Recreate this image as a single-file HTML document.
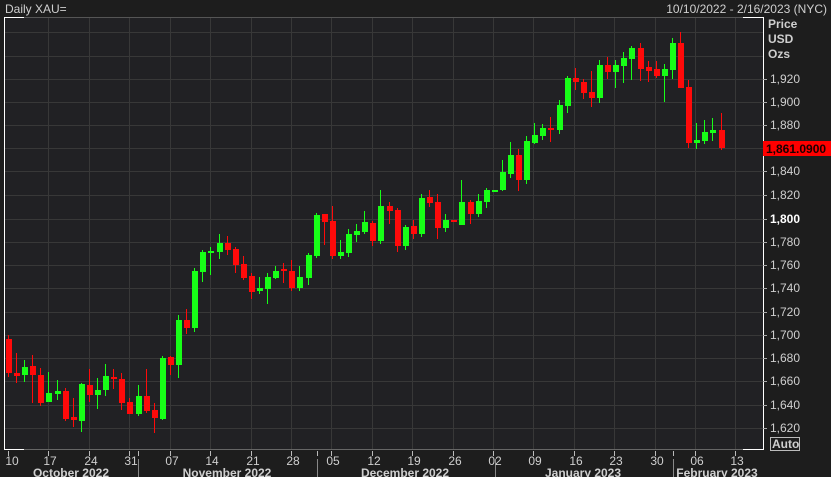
<!DOCTYPE html>
<html><head><meta charset="utf-8"><style>
html,body{margin:0;padding:0;background:#1d1d1d;width:831px;height:477px;overflow:hidden}
svg{display:block}
text{font-family:"Liberation Sans Narrow","Liberation Sans",sans-serif;fill:#cfcfcf;font-size:12px}
.b{font-weight:bold}
</style></head><body>
<svg width="831" height="477" viewBox="0 0 831 477" xmlns="http://www.w3.org/2000/svg">
<rect x="0" y="0" width="831" height="477" fill="#1d1d1d"/>
<text x="5" y="13" font-size="12">Daily XAU=</text>
<text x="827" y="13" text-anchor="end" font-size="11.5">10/10/2022 - 2/16/2023 (NYC)</text>
<rect x="4" y="17" width="759" height="433" fill="#212124"/>
<g stroke="#383838" stroke-width="1">
<path d="M4 32.5H763M4 56.5H763M4 79.5H763M4 102.5H763M4 125.5H763M4 148.5H763M4 171.5H763M4 195.5H763M4 219.5H763M4 242.5H763M4 265.5H763M4 288.5H763M4 312.5H763M4 335.5H763M4 358.5H763M4 381.5H763M4 405.5H763M4 428.5H763"/>
<path d="M48.5 17V450M89.5 17V450M129.5 17V450M170.5 17V450M210.5 17V450M251.5 17V450M291.5 17V450M331.5 17V450M372.5 17V450M412.5 17V450M453.5 17V450M493.5 17V450M533.5 17V450M574.5 17V450M614.5 17V450M655.5 17V450M695.5 17V450M735.5 17V450"/>
</g>
<path d="M4 17.5H763" stroke="#555" stroke-width="1"/>
<path d="M4 17.5H24M743 17.5H763" stroke="#fff" stroke-width="1"/>
<path d="M4.5 17V450M763.5 17V450M4 449.5H24M743 449.5H763" stroke="#fff" stroke-width="1"/>
<path d="M24 449.5H743" stroke="#666" stroke-width="1"/>
<g fill="#ff0a0a">
<rect x="8" y="335" width="1" height="42"/><rect x="6" y="339" width="6" height="34"/>
<rect x="16" y="353" width="1" height="30"/><rect x="14" y="373" width="6" height="3"/>
<rect x="32" y="355" width="1" height="48"/><rect x="30" y="366" width="6" height="9"/>
<rect x="40" y="368" width="1" height="38"/><rect x="38" y="375" width="6" height="28"/>
<rect x="65" y="388" width="1" height="33"/><rect x="63" y="391" width="6" height="28"/>
<rect x="73" y="398" width="1" height="29"/><rect x="71" y="417" width="6" height="3"/>
<rect x="89" y="369" width="1" height="33"/><rect x="87" y="385" width="6" height="10"/>
<rect x="113" y="369" width="1" height="20"/><rect x="111" y="377" width="6" height="2"/>
<rect x="121" y="373" width="1" height="37"/><rect x="119" y="379" width="6" height="24"/>
<rect x="129" y="398" width="1" height="16"/><rect x="127" y="402" width="6" height="12"/>
<rect x="146" y="369" width="1" height="44"/><rect x="144" y="396" width="6" height="15"/>
<rect x="154" y="403" width="1" height="30"/><rect x="152" y="410" width="6" height="8"/>
<rect x="170" y="356" width="1" height="19"/><rect x="168" y="357" width="6" height="8"/>
<rect x="186" y="309" width="1" height="25"/><rect x="184" y="320" width="6" height="8"/>
<rect x="227" y="236" width="1" height="19"/><rect x="225" y="243" width="6" height="7"/>
<rect x="235" y="247" width="1" height="26"/><rect x="233" y="249" width="6" height="16"/>
<rect x="243" y="256" width="1" height="24"/><rect x="241" y="264" width="6" height="14"/>
<rect x="251" y="273" width="1" height="26"/><rect x="249" y="276" width="6" height="16"/>
<rect x="283" y="263" width="1" height="20"/><rect x="281" y="269" width="6" height="2"/>
<rect x="291" y="260" width="1" height="31"/><rect x="289" y="271" width="6" height="17"/>
<rect x="324" y="214" width="1" height="31"/><rect x="322" y="214" width="6" height="8"/>
<rect x="332" y="206" width="1" height="53"/><rect x="330" y="221" width="6" height="35"/>
<rect x="372" y="221" width="1" height="25"/><rect x="370" y="223" width="6" height="18"/>
<rect x="389" y="202" width="1" height="22"/><rect x="387" y="206" width="6" height="5"/>
<rect x="397" y="208" width="1" height="44"/><rect x="395" y="210" width="6" height="36"/>
<rect x="413" y="220" width="1" height="19"/><rect x="411" y="226" width="6" height="8"/>
<rect x="429" y="190" width="1" height="17"/><rect x="427" y="197" width="6" height="6"/>
<rect x="437" y="194" width="1" height="45"/><rect x="435" y="202" width="6" height="26"/>
<rect x="451" y="220" width="6" height="2"/>
<rect x="470" y="200" width="1" height="24"/><rect x="468" y="202" width="6" height="12"/>
<rect x="518" y="149" width="1" height="42"/><rect x="516" y="155" width="6" height="25"/>
<rect x="550" y="117" width="1" height="25"/><rect x="548" y="128" width="6" height="2"/>
<rect x="575" y="68" width="1" height="22"/><rect x="573" y="78" width="6" height="4"/>
<rect x="583" y="79" width="1" height="20"/><rect x="581" y="82" width="6" height="11"/>
<rect x="591" y="71" width="1" height="36"/><rect x="589" y="92" width="6" height="6"/>
<rect x="607" y="57" width="1" height="22"/><rect x="605" y="65" width="6" height="7"/>
<rect x="640" y="43" width="1" height="38"/><rect x="638" y="48" width="6" height="21"/>
<rect x="648" y="61" width="1" height="21"/><rect x="646" y="67" width="6" height="4"/>
<rect x="656" y="61" width="1" height="17"/><rect x="654" y="69" width="6" height="7"/>
<rect x="680" y="32" width="1" height="56"/><rect x="678" y="43" width="6" height="45"/>
<rect x="688" y="80" width="1" height="68"/><rect x="686" y="87" width="6" height="56"/>
<rect x="721" y="113" width="1" height="37"/><rect x="719" y="130" width="6" height="18"/>
</g>
<g fill="#17ff17">
<rect x="24" y="360" width="1" height="22"/><rect x="22" y="367" width="6" height="8"/>
<rect x="48" y="372" width="1" height="30"/><rect x="46" y="393" width="6" height="9"/>
<rect x="57" y="380" width="1" height="20"/><rect x="55" y="391" width="6" height="3"/>
<rect x="81" y="383" width="1" height="49"/><rect x="79" y="384" width="6" height="37"/>
<rect x="97" y="378" width="1" height="31"/><rect x="95" y="390" width="6" height="5"/>
<rect x="105" y="364" width="1" height="32"/><rect x="103" y="376" width="6" height="14"/>
<rect x="138" y="385" width="1" height="31"/><rect x="136" y="396" width="6" height="18"/>
<rect x="162" y="356" width="1" height="64"/><rect x="160" y="358" width="6" height="61"/>
<rect x="178" y="315" width="1" height="63"/><rect x="176" y="320" width="6" height="45"/>
<rect x="194" y="268" width="1" height="64"/><rect x="192" y="271" width="6" height="57"/>
<rect x="202" y="250" width="1" height="32"/><rect x="200" y="252" width="6" height="20"/>
<rect x="210" y="247" width="1" height="28"/><rect x="208" y="251" width="6" height="2"/>
<rect x="219" y="234" width="1" height="25"/><rect x="217" y="243" width="6" height="9"/>
<rect x="259" y="277" width="1" height="17"/><rect x="257" y="288" width="6" height="3"/>
<rect x="267" y="273" width="1" height="31"/><rect x="265" y="277" width="6" height="12"/>
<rect x="275" y="266" width="1" height="13"/><rect x="273" y="271" width="6" height="7"/>
<rect x="299" y="266" width="1" height="25"/><rect x="297" y="277" width="6" height="11"/>
<rect x="308" y="253" width="1" height="32"/><rect x="306" y="255" width="6" height="23"/>
<rect x="316" y="213" width="1" height="45"/><rect x="314" y="215" width="6" height="41"/>
<rect x="340" y="240" width="1" height="19"/><rect x="338" y="252" width="6" height="4"/>
<rect x="348" y="229" width="1" height="28"/><rect x="346" y="234" width="6" height="19"/>
<rect x="356" y="224" width="1" height="18"/><rect x="354" y="231" width="6" height="4"/>
<rect x="364" y="211" width="1" height="23"/><rect x="362" y="222" width="6" height="10"/>
<rect x="380" y="190" width="1" height="54"/><rect x="378" y="206" width="6" height="35"/>
<rect x="405" y="225" width="1" height="25"/><rect x="403" y="227" width="6" height="19"/>
<rect x="421" y="194" width="1" height="43"/><rect x="419" y="198" width="6" height="36"/>
<rect x="445" y="214" width="1" height="18"/><rect x="443" y="220" width="6" height="8"/>
<rect x="461" y="180" width="1" height="45"/><rect x="459" y="202" width="6" height="23"/>
<rect x="478" y="194" width="1" height="23"/><rect x="476" y="201" width="6" height="13"/>
<rect x="486" y="188" width="1" height="20"/><rect x="484" y="190" width="6" height="12"/>
<rect x="492" y="190" width="6" height="2"/>
<rect x="502" y="160" width="1" height="31"/><rect x="500" y="172" width="6" height="18"/>
<rect x="510" y="142" width="1" height="36"/><rect x="508" y="155" width="6" height="19"/>
<rect x="526" y="136" width="1" height="48"/><rect x="524" y="141" width="6" height="39"/>
<rect x="534" y="123" width="1" height="21"/><rect x="532" y="135" width="6" height="8"/>
<rect x="542" y="124" width="1" height="16"/><rect x="540" y="128" width="6" height="8"/>
<rect x="559" y="100" width="1" height="34"/><rect x="557" y="105" width="6" height="25"/>
<rect x="567" y="76" width="1" height="37"/><rect x="565" y="78" width="6" height="28"/>
<rect x="599" y="60" width="1" height="43"/><rect x="597" y="65" width="6" height="33"/>
<rect x="615" y="60" width="1" height="28"/><rect x="613" y="65" width="6" height="7"/>
<rect x="623" y="52" width="1" height="31"/><rect x="621" y="58" width="6" height="8"/>
<rect x="631" y="46" width="1" height="34"/><rect x="629" y="48" width="6" height="11"/>
<rect x="664" y="64" width="1" height="38"/><rect x="662" y="69" width="6" height="7"/>
<rect x="672" y="38" width="1" height="41"/><rect x="670" y="43" width="6" height="27"/>
<rect x="696" y="123" width="1" height="26"/><rect x="694" y="140" width="6" height="3"/>
<rect x="704" y="120" width="1" height="24"/><rect x="702" y="132" width="6" height="9"/>
<rect x="712" y="118" width="1" height="23"/><rect x="710" y="130" width="6" height="3"/>
</g>
<g class="b">
<text x="768" y="28" class="b">Price</text>
<text x="768" y="43" class="b">USD</text>
<text x="768" y="58" class="b">Ozs</text>
</g>
<g stroke="#aaa"><path d="M763 79.5h4M763 102.5h4M763 125.5h4M763 171.5h4M763 195.5h4M763 219.5h4M763 242.5h4M763 265.5h4M763 288.5h4M763 312.5h4M763 335.5h4M763 358.5h4M763 381.5h4M763 405.5h4M763 428.5h4"/></g>
<g font-size="11.5">
<text x="770" y="83">1,920</text><text x="770" y="106">1,900</text><text x="770" y="129">1,880</text>
<text x="770" y="175">1,840</text><text x="770" y="199">1,820</text><text x="770" y="223" style="fill:#fff;font-weight:bold">1,800</text>
<text x="770" y="246">1,780</text><text x="770" y="269">1,760</text><text x="770" y="292">1,740</text>
<text x="770" y="316">1,720</text><text x="770" y="339">1,700</text><text x="770" y="362">1,680</text>
<text x="770" y="385">1,660</text><text x="770" y="409">1,640</text><text x="770" y="432">1,620</text>
</g>
<rect x="763" y="141" width="68" height="15" fill="#ff0000"/>
<text x="766" y="153" class="b" style="fill:#1a0000;font-size:12px">1,861.0900</text>
<rect x="770.5" y="437.5" width="29" height="13" fill="none" stroke="#bbb"/>
<text x="772" y="448" class="b" font-size="11.5">Auto</text>
<g stroke="#bbb"><path d="M8.5 451v5M48.5 451v5M89.5 451v5M129.5 451v5M138.5 451v5M170.5 451v5M210.5 451v5M251.5 451v5M291.5 451v5M317.5 451v5M331.5 451v5M372.5 451v5M412.5 451v5M453.5 451v5M493.5 451v5M533.5 451v5M574.5 451v5M614.5 451v5M655.5 451v5M673.5 451v5M695.5 451v5M735.5 451v5"/>
<path d="M138.5 459v18M317.5 459v18M495.5 459v18M673.5 459v18" stroke="#888"/></g>
<g font-size="11.5" text-anchor="middle">
<text x="12" y="465">10</text><text x="50" y="465">17</text><text x="91" y="465">24</text><text x="131" y="465">31</text>
<text x="172" y="465">07</text><text x="212" y="465">14</text><text x="253" y="465">21</text><text x="293" y="465">28</text>
<text x="333" y="465">05</text><text x="374" y="465">12</text><text x="414" y="465">19</text><text x="455" y="465">26</text>
<text x="495" y="465">02</text><text x="535" y="465">09</text><text x="576" y="465">16</text><text x="616" y="465">23</text>
<text x="657" y="465">30</text><text x="697" y="465">06</text><text x="737" y="465">13</text>
</g>
<g class="b" text-anchor="middle" font-size="12">
<text x="71" y="477" class="b">October 2022</text>
<text x="227" y="477" class="b">November 2022</text>
<text x="405" y="477" class="b">December 2022</text>
<text x="583" y="477" class="b">January 2023</text>
<text x="717" y="477" class="b">February 2023</text>
</g>
</svg>
</body></html>
